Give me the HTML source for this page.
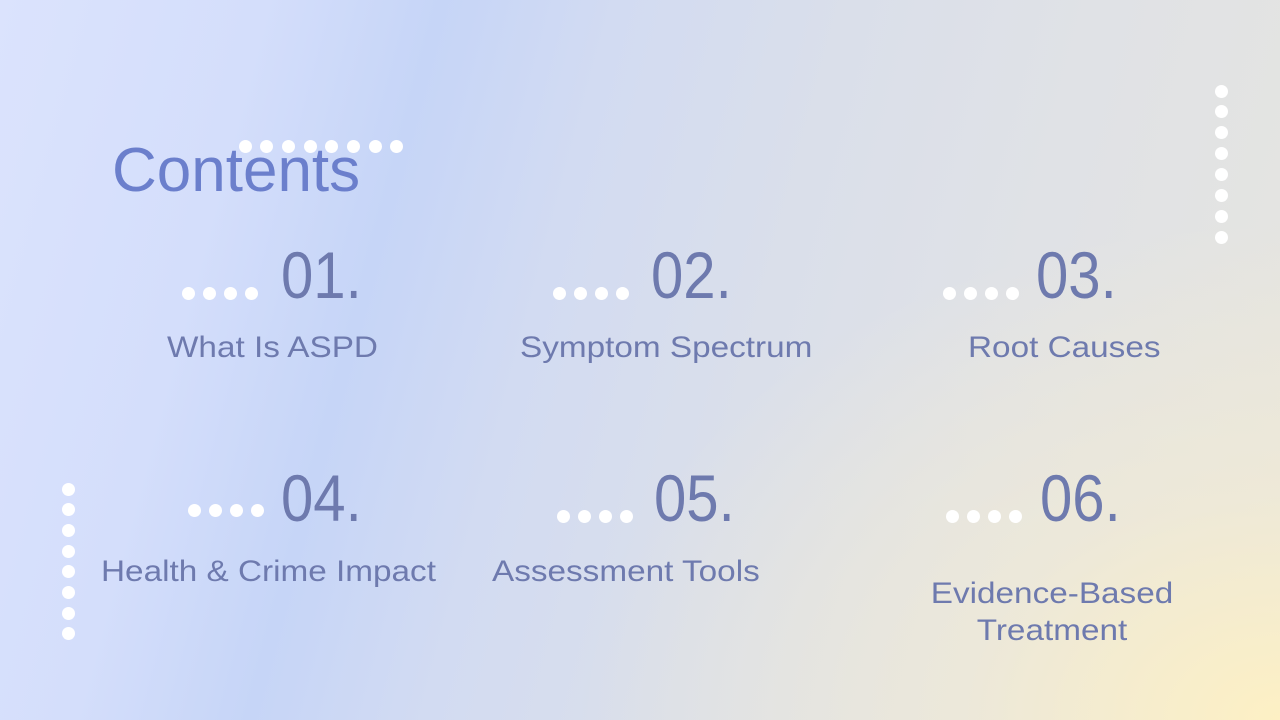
<!DOCTYPE html>
<html><head><meta charset="utf-8"><style>
html,body{margin:0;padding:0}
body{width:1280px;height:720px;position:relative;overflow:hidden;font-family:"Liberation Sans",sans-serif;
background:
radial-gradient(ellipse 700px 500px at 1280px 720px,rgba(253,240,196,1) 0%,rgba(244,236,210,0.6) 45%,rgba(230,230,225,0) 100%),
linear-gradient(105deg,#dbe3fd 0%,#d4defb 18%,#c6d5f7 30%,#d2dbf2 42%,#dadfea 58%,#e0e2e6 75%,#e6e5df 100%);}
.t{position:absolute;line-height:1;white-space:nowrap;color:#6e7aae;transform-origin:0 0}
.n{font-size:66px;transform:scaleX(0.88)}
.l{font-size:30px;transform:scaleX(1.11)}
.c{transform-origin:50% 0}
.d{position:absolute;width:13px;height:13px;border-radius:50%;background:#fff}
</style></head><body>
<div class="t" style="left:112px;top:140px;font-size:62px;color:#6b7fcc">Contents</div>

<div class="t n" style="left:281px;top:242px">01.</div>
<div class="t n" style="left:651px;top:242px">02.</div>
<div class="t n" style="left:1036px;top:242px">03.</div>
<div class="t n" style="left:281px;top:465px">04.</div>
<div class="t n" style="left:654px;top:465px">05.</div>
<div class="t n" style="left:1040px;top:465px">06.</div>

<div class="t l" style="left:167px;top:333px">What Is ASPD</div>
<div class="t l" style="left:520px;top:333px">Symptom Spectrum</div>
<div class="t l" style="left:968px;top:333px">Root Causes</div>
<div class="t l" style="left:101px;top:557px">Health &amp; Crime Impact</div>
<div class="t l" style="left:492px;top:557px">Assessment Tools</div>
<div class="t l c" style="left:902px;top:579px;width:300px;text-align:center">Evidence-Based</div>
<div class="t l c" style="left:902px;top:616px;width:300px;text-align:center">Treatment</div>

<div id="dots"></div>
<script>
var h='';
function dot(x,y){h+='<div class="d" style="left:'+(x-6.5)+'px;top:'+(y-6.5)+'px"></div>';}
for(var i=0;i<8;i++)dot(245+i*21.7,146);
for(var i=0;i<8;i++)dot(1221,91+i*20.9);
for(var i=0;i<8;i++)dot(68,489+i*20.7);
[[188,293],[559,293],[949,293],[194,510],[563,516],[952,516]].forEach(function(p){for(var i=0;i<4;i++)dot(p[0]+i*21,p[1]);});
document.getElementById('dots').innerHTML=h;
</script>
</body></html>
